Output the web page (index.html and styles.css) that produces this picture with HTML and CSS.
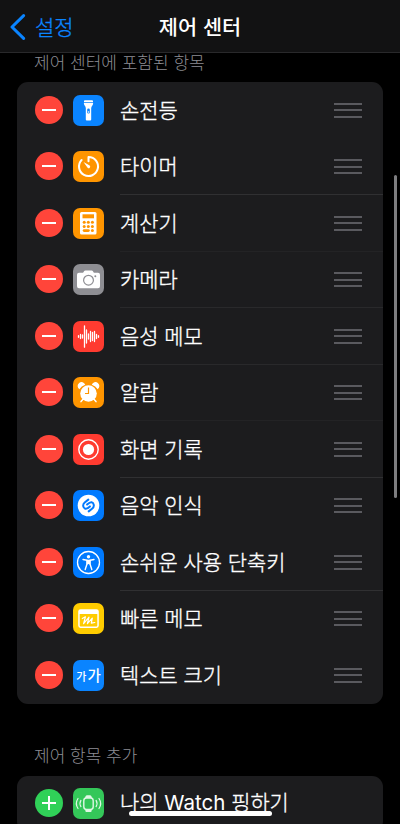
FILE: index.html
```
<!DOCTYPE html>
<html lang="ko">
<head>
<meta charset="utf-8">
<title>제어 센터</title>
<link rel="stylesheet" href="styles.css">
</head>
<body>
<header class="nav">
  <a class="back"><svg width="16" height="26" viewBox="0 0 16 26"><path d="M13.6 1.6 2 13 13.6 24.4" fill="none" stroke="#0a84ff" stroke-width="3" stroke-linecap="round" stroke-linejoin="round"/></svg><span>설정</span></a>
  <h1>제어 센터</h1>
</header>
<main>
  <h2 class="label first">제어 센터에 포함된 항목</h2>
  <ul class="card">
    <li class="row line-none">
      <i class="toggle"></i>
      <svg class="icon blue" viewBox="0 0 31 31"><path d="M11 6.200q0-.9.9-.9h7.200q.9 0 .9.900v1h-9zM10.800 8.100h9.400c0 2.600-2 2.800-2 5.200V24.400q0 1-1 1h-3.400q-1 0-1-1V13.300c0-2.400-2-2.600-2-5.200z"/><rect x="14.200" y="13.500" width="2.600" height="5" rx="1.300" fill="#0a84ff"/><circle cx="15.500" cy="17" r=".8"/></svg>
      <span class="name">손전등</span><i class="grip"></i>
    </li>
    <li class="row">
      <i class="toggle"></i>
      <svg class="icon orange" viewBox="0 0 31 31"><path d="M15.500 10.200V6A9.500 9.500 0 1 1 8.600 9" fill="none" stroke="#fff" stroke-width="2"  stroke-linecap="round" stroke-linejoin="round"/><path d="M10.500 10.900 16.700 14.500a1.500 1.500 0 0 1-2.100 2.200z"/></svg>
      <span class="name">타이머</span><i class="grip"></i>
    </li>
    <li class="row line-faint">
      <i class="toggle"></i>
      <svg class="icon orange" viewBox="0 0 31 31"><rect x="7" y="4" width="16.500" height="22.500" rx="1.500"/><g fill="#ff9500"><rect x="9.500" y="6.300" width="11.500" height="4"/><circle cx="11.200" cy="14.300" r="1.500"/><circle cx="15.300" cy="14.300" r="1.500"/><circle cx="19.400" cy="14.300" r="1.500"/><circle cx="11.200" cy="18.500" r="1.500"/><circle cx="15.300" cy="18.500" r="1.500"/><circle cx="19.400" cy="18.500" r="1.500"/><rect x="9.700" y="21.200" width="7.100" height="2.800" rx="1.400"/><circle cx="19.400" cy="22.600" r="1.500"/></g></svg>
      <span class="name">계산기</span><i class="grip"></i>
    </li>
    <li class="row line-soft">
      <i class="toggle"></i>
      <svg class="icon gray" viewBox="0 0 31 31"><path d="M6 8.800h3.700c1-.1 1.300-2.300 2.700-2.300h6.200c1.400 0 1.700 2.200 2.700 2.300H25q2 0 2 2v11.400q0 2-2 2H6q-2 0-2-2V10.800q0-2 2-2z"/><circle cx="15.500" cy="16.200" r="4.900" fill="none" stroke="#8e8e93" stroke-width="1.200"/><circle cx="22.300" cy="12.300" r="1" fill="#8e8e93"/></svg>
      <span class="name">카메라</span><i class="grip"></i>
    </li>
    <li class="row line-soft">
      <i class="toggle"></i>
      <svg class="icon red" viewBox="0 0 31 31"><path d="M5.500 14.700v1.600M7.500 13.500v4M9.500 14v3M11.500 4.800v21.400M13.500 9v13M15.500 13v5M17.500 10.500v10M19.500 11.500v8M21.500 10.500v10M23.500 13.500v4M25.500 14.700v1.600" stroke="#fff" stroke-width="1.300" stroke-linecap="round"/></svg>
      <span class="name">음성 메모</span><i class="grip"></i>
    </li>
    <li class="row line-faint">
      <i class="toggle"></i>
      <svg class="icon orange" viewBox="0 0 31 31"><circle cx="15.500" cy="16.500" r="8.300"/><path d="M6.300 12.200a3.900 3.900 0 1 1 5.900-4.500 10 10 0 0 0-5.900 4.500zM24.700 12.200a3.900 3.900 0 1 0-5.900-4.500 10 10 0 0 1 5.900 4.500z"/><path d="M9.800 22.500 8 24.600M21.200 22.500 23 24.600" stroke="#fff" stroke-width="1.500" stroke-linecap="round"/><path d="M15.500 10.500v6h-3.500" fill="none" stroke="#ff9500" stroke-width="1.200"/></svg>
      <span class="name">알람</span><i class="grip"></i>
    </li>
    <li class="row">
      <i class="toggle"></i>
      <svg class="icon red" viewBox="0 0 31 31"><circle cx="15.500" cy="15.500" r="9.700" fill="none" stroke="#fff" stroke-width="1.400"/><circle cx="15.500" cy="15.500" r="5.600"/></svg>
      <span class="name">화면 기록</span><i class="grip"></i>
    </li>
    <li class="row line-none">
      <i class="toggle"></i>
      <svg class="icon azure" viewBox="0 0 31 31"><circle cx="15.500" cy="15.500" r="10.800"/><g fill="none" stroke="#007aff" stroke-width="2" stroke-linecap="round"><path d="M15.300 9.600 11.700 12.500C9.300 14.500 9.900 18 12.400 18.700 14 19.100 15 18.200 16.900 16.400"/><path d="M15.700 21.400 19.300 18.500C21.700 16.500 21.100 13 18.600 12.300 17 11.900 16 12.800 14.100 14.600"/></g></svg>
      <span class="name">음악 인식</span><i class="grip"></i>
    </li>
    <li class="row">
      <i class="toggle"></i>
      <svg class="icon azure" viewBox="0 0 31 31"><circle cx="15.500" cy="15.500" r="11" fill="none" stroke="#fff" stroke-width="1.300"/><circle cx="15.500" cy="9.700" r="1.700"/><path d="M10 12.500 14 13.300V17l-1.800 5.500M21 12.500l-4 .8V17l1.800 5.500" fill="none" stroke="#fff" stroke-width="1.400" stroke-linecap="round" stroke-linejoin="round"/><path d="M13.500 12.700h4v5l-2-.7-2 .7z"/></svg>
      <span class="name">손쉬운 사용 단축키</span><i class="grip"></i>
    </li>
    <li class="row line-none">
      <i class="toggle"></i>
      <svg class="icon yellow" viewBox="0 0 31 31"><path fill-rule="evenodd" d="M7.500 6.300h16q2.300 0 2.300 2.300v14q0 2.300-2.300 2.300h-16q-2.300 0-2.300-2.300v-14q0-2.300 2.300-2.300zM6.700 11v11.400q0 1 1 1h15.600q1 0 1-1V11z"/><path d="M9.300 15.500 12.400 13.800 10.600 20.700 16 14.200 14.400 20.700 19.300 15.200 18.300 20.200 21.800 19.500" fill="none" stroke="#fff" stroke-width="1.200" stroke-linecap="round" stroke-linejoin="round"/></svg>
      <span class="name">빠른 메모</span><i class="grip"></i>
    </li>
    <li class="row line-none">
      <i class="toggle"></i>
      <span class="icon blue sizes"><small>가</small><b>가</b></span>
      <span class="name">텍스트 크기</span><i class="grip"></i>
    </li>
  </ul>
  <h2 class="label second">제어 항목 추가</h2>
  <ul class="card">
    <li class="row line-none">
      <i class="toggle add"></i>
      <svg class="icon green" viewBox="0 0 31 31"><g fill="none" stroke="#dff7e5" stroke-linecap="round"><rect x="10.800" y="10" width="9.400" height="11.400" rx="2.700" stroke-width="1.400"/><path stroke-width="1.200" d="M7.900 12.400a6 6 0 0 0 0 6.200M5 10.500a9 9 0 0 0 0 10M23.100 12.400a6 6 0 0 1 0 6.200M26 10.500a9 9 0 0 1 0 10"/></g><path fill="#dff7e5" d="M12 10q.4-2.700 1.700-2.700h3.600q1.300 0 1.700 2.700zM12 21.400q.4 2.700 1.700 2.700h3.600q1.300 0 1.700-2.700z"/></svg>
      <span class="name">나의 <span class="latin">Watch</span> 핑하기</span>
    </li>
  </ul>
</main>
<div class="scrollbar"></div>
<div class="home"></div>
</body>
</html>
```
FILE: styles.css
```
* { box-sizing: border-box; }
html, body { height: 100%; }
body {
  margin: 0;
  width: 400px;
  height: 824px;
  overflow: hidden;
  background: #000;
  color: #fff;
  font-family: "Noto Sans CJK KR", "Liberation Sans", sans-serif;
  display: flex;
  flex-direction: column;
  position: relative;
}
.nav {
  flex: none;
  height: 53px;
  display: grid;
  grid-template-columns: 1fr auto 1fr;
  align-items: center;
  padding: 1px 10px 0;
  background: #121213;
  border-bottom: 1px solid #29292b;
}
.back { display: flex; align-items: center; gap: 9px; color: #0a84ff; font-size: 21px; line-height: 28px; font-weight: 300; -webkit-text-stroke: 0.35px currentColor; }
.back svg { display: block; }
.back span { padding-bottom: 2px; }
h1 { margin: 0; padding-bottom: 2px; font-size: 20.8px; line-height: 28px; font-weight: 500; }
main { flex: 1; min-height: 0; padding: 0 17px; }
.label { margin: 0; padding-left: 17px; font-size: 17px; line-height: 24px; font-weight: 300; color: #8d8d93; }
.first { height: 29px; line-height: 18px; }
.second { height: 72px; padding-top: 39px; }
.card { margin: 0; padding: 0; list-style: none; background: #1c1c1e; border-radius: 11px; }
.row {
  --line: #303032;
  height: 56.5px; display: flex; align-items: center; padding: 0 21px 0 18px;
  background: linear-gradient(var(--line), var(--line)) 103px 100% / 263px 1px no-repeat;
}
.line-soft { --line: #29292b; }
.line-faint { --line: #232325; }
.line-none { --line: transparent; }
.toggle {
  flex: none; width: 28px; height: 28px; margin: 0 10px 0.6px 0; border-radius: 50%;
  background: linear-gradient(#fff, #fff) center / 14px 2px no-repeat #ff453a;
}
.add { background: linear-gradient(#fff, #fff) center / 14px 2px no-repeat, linear-gradient(#fff, #fff) center / 2px 14px no-repeat #30d158; }
.icon { flex: none; width: 31px; height: 31px; margin-right: 16px; border-radius: 7px; fill: #fff; }
.blue { background: #0a84ff; }
.azure { background: #007aff; }
.orange { background: #ff9500; }
.gray { background: #8e8e93; }
.red { background: #ff3b30; }
.yellow { background: #ffcc00; }
.green { background: #34c759; }
.sizes { display: flex; align-items: baseline; justify-content: center; gap: 1px; line-height: 29px; }
.sizes small { font-size: 11px; font-weight: 500; }
.sizes b { font-size: 14.5px; font-weight: 500; }
.name { flex: 1; padding-bottom: 2.6px; font-size: 20.9px; line-height: 28px; font-weight: 300; white-space: nowrap; -webkit-text-stroke: 0.35px currentColor; }
.latin { font-family: Inter, "Liberation Sans", sans-serif; font-size: 20.5px; font-weight: 400; -webkit-text-stroke: 0; }
.grip { flex: none; width: 28px; height: 15px; border: solid #5a5a5f; border-width: 2px 0; background: linear-gradient(#5a5a5f, #5a5a5f) center / 28px 2px no-repeat; }
.scrollbar { position: absolute; left: 394px; top: 175px; width: 3px; height: 323px; border-radius: 2px; background: #7e7e80; }
.home { position: absolute; left: 129px; top: 811px; width: 143px; height: 5px; border-radius: 3px; background: #fff; }
```
